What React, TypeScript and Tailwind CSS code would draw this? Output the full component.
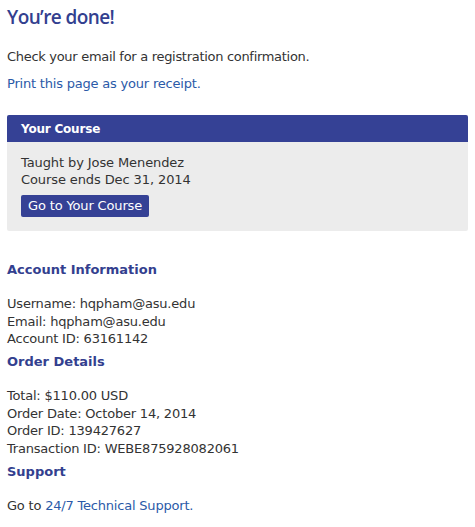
import React from 'react';

const font = { fontFamily: '"DejaVu Sans", Verdana, sans-serif' };

const Section: React.FC<{ title: string; children: React.ReactNode }> = ({ title, children }) => (
  <div>
    <h2 className="text-[13px] font-bold text-[#333f8f] leading-[20px] mb-[15px]">{title}</h2>
    <div className="leading-[17.5px] tracking-[-0.2px]">{children}</div>
  </div>
);

export default function App() {
  return (
    <div className="w-[475px] h-[527px] bg-white text-[#333] text-[13px] px-[7px] pt-[5px]" style={font}>
      <h1
        className="text-[19px] font-semibold text-[#333f8f] leading-[24px] tracking-[-0.6px]"
        style={{ fontFamily: '"Open Sans", sans-serif' }}
      >
        You’re done!
      </h1>

      <p className="mt-[19px] leading-[18px] tracking-[-0.3px]">Check your email for a registration confirmation.</p>
      <p className="mt-[9px] leading-[18px] tracking-[-0.2px]">
        <a className="text-[#2b5aa8]">Print this page as your receipt.</a>
      </p>

      {/* Course panel */}
      <div className="mt-[22px] rounded-[2px] overflow-hidden bg-[#ececec]">
        <div className="bg-[#354195] h-[27px] px-[14px] flex items-center">
          <span className="text-white font-bold text-[12px] tracking-[-0.2px]">Your Course</span>
        </div>
        <div className="px-[14px] pt-[13px] pb-[14px] leading-[16.5px] tracking-[-0.1px]">
          <div>Taught by Jose Menendez</div>
          <div>Course ends Dec 31, 2014</div>
          <button className="mt-[7px] h-[22px] px-[7px] bg-[#354195] text-white rounded-[2px] text-[13px] leading-[22px] tracking-[-0.15px]">
            Go to Your Course
          </button>
        </div>
      </div>

      <div className="mt-[29px] flex flex-col gap-[4.5px]">
        <Section title="Account Information">
          <div>Username: hqpham@asu.edu</div>
          <div>Email: hqpham@asu.edu</div>
          <div>Account ID: 63161142</div>
        </Section>
        <Section title="Order Details">
          <div>Total: $110.00 USD</div>
          <div>Order Date: October 14, 2014</div>
          <div>Order ID: 139427627</div>
          <div>Transaction ID: WEBE875928082061</div>
        </Section>
        <Section title="Support">
          <div>
            Go to <a className="text-[#2b5aa8]">24/7 Technical Support.</a>
          </div>
        </Section>
      </div>
    </div>
  );
}
